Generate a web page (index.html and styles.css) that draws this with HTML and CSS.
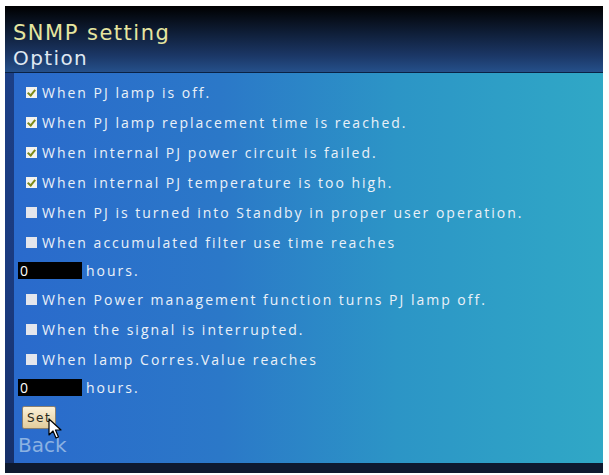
FILE: index.html
```html
<!DOCTYPE html>
<html lang="en">
<head>
    <meta charset="UTF-8">
    <title>SNMP setting</title>
    <link rel="stylesheet" href="styles.css">
</head>
<body>

    <div class="frame">
        <div class="header">
            <h1>SNMP setting</h1>
            <h2>Option</h2>
        </div>

        <div class="body">
            <div class="strip"></div>
            <div class="panel">
                <div class="row"><span class="box checked"></span>When PJ lamp is off.</div>
                <div class="row"><span class="box checked"></span>When PJ lamp replacement time is reached.</div>
                <div class="row"><span class="box checked"></span>When internal PJ power circuit is failed.</div>
                <div class="row"><span class="box checked"></span>When internal PJ temperature is too high.</div>
                <div class="row"><span class="box"></span>When PJ is turned into Standby in proper user operation.</div>
                <div class="row"><span class="box"></span>When accumulated filter use time reaches</div>
                <div class="hours"><span class="field">0</span>hours.</div>
                <div class="row"><span class="box"></span>When Power management function turns PJ lamp off.</div>
                <div class="row"><span class="box"></span>When the signal is interrupted.</div>
                <div class="row"><span class="box"></span>When lamp Corres.Value reaches</div>
                <div class="hours"><span class="field">0</span>hours.</div>

                <div class="set-wrap">
                    <button class="set">Set</button>
                    <svg class="cursor" width="14" height="22" viewBox="0 0 14 22">
                        <path d="M1 1 L1 17 L5 13 L8 20 L10.5 19 L7.5 12 L13 12 Z" fill="#ffffff" stroke="#000000" stroke-width="1.2" stroke-linejoin="round"/>
                    </svg>
                </div>
                <div class="back">Back</div>
            </div>
        </div>

        <div class="footer"></div>
    </div>

</body>
</html>
```

FILE: styles.css
```css
body {
    margin: 0;
    background-color: #ffffff;
    font-family: 'DejaVu Sans', sans-serif;
}

.frame {
    margin: 6px 6px 0 5px;
    width: 598px;
    background-color: #0e1a30;
}

.header {
    height: 66px;
    padding-left: 8px;
    background: linear-gradient(to bottom, #000000 0%, #0d1a30 35%, #1b3766 75%, #25508a 100%);
    border-bottom: 1px solid #0a2244;
}

.header h1 {
    margin: 0;
    padding-top: 14px;
    font-size: 21px;
    font-weight: normal;
    line-height: 26px;
    letter-spacing: 1.5px;
    color: #e6e6a0;
}

.header h2 {
    margin: 0;
    font-size: 20px;
    font-weight: normal;
    line-height: 24px;
    letter-spacing: 1.4px;
    color: #dfe8f2;
}

.body {
    display: flex;
}

.strip {
    width: 9px;
    background: linear-gradient(to bottom, #1c3f86, #1a3a7e 60%, #16306a);
}

.panel {
    flex: 1;
    height: 386px;
    padding: 4px 0 0 4px;
    background: linear-gradient(to right, #2a6acc 0%, #2b78c8 35%, #2c95c6 65%, #30a8c6 100%);
    color: #eaf1f8;
    font-family: 'Open Sans', sans-serif;
    font-size: 14px;
}

.row {
    display: flex;
    align-items: center;
    height: 30px;
    padding-left: 8px;
    letter-spacing: 2px;
    white-space: nowrap;
}

.box {
    position: relative;
    width: 11px;
    height: 11px;
    margin-right: 5px;
    background-color: #e4e6ec;
    flex-shrink: 0;
}

.box.checked {
    background-color: #f2f2ee;
}

.box.checked::after {
    content: "";
    position: absolute;
    left: 3px;
    top: 1px;
    width: 3px;
    height: 6px;
    border-right: 2px solid #7d8a1c;
    border-bottom: 2px solid #7d8a1c;
    transform: rotate(40deg);
}

.hours {
    display: flex;
    align-items: center;
    height: 27px;
    letter-spacing: 2px;
}

.field {
    width: 62px;
    height: 17px;
    margin-right: 4px;
    padding-left: 2px;
    background-color: #000000;
    color: #ffffff;
    line-height: 17px;
}

.set-wrap {
    position: relative;
    margin: 5px 0 0 4px;
    height: 24px;
}

.set {
    height: 23px;
    padding: 0 4px;
    border: 1px solid #8a8070;
    border-radius: 2px;
    background: linear-gradient(to bottom, #fbf1d8, #e2cc9c);
    color: #2a2a20;
    font-family: 'DejaVu Sans', sans-serif;
    font-size: 12px;
    letter-spacing: 1.5px;
}

.cursor {
    position: absolute;
    left: 26px;
    top: 12px;
}

.back {
    margin: 2px 0 0 0;
    font-family: 'DejaVu Sans', sans-serif;
    font-size: 20px;
    line-height: 26px;
    color: #8cb2e2;
}

.footer {
    height: 10px;
    background-color: #0e1a30;
}
```
